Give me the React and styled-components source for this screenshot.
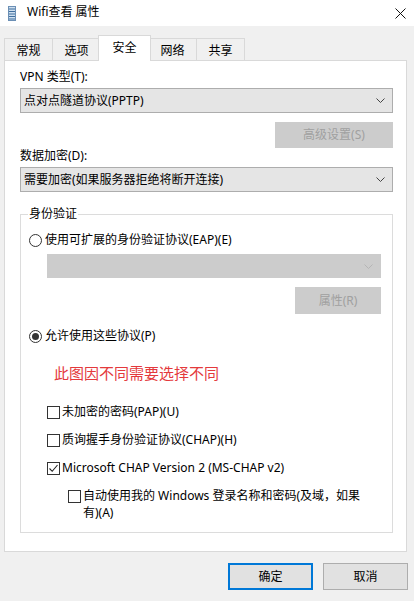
import React from "react";
import styled, { createGlobalStyle } from "styled-components";

const GlobalStyle = createGlobalStyle`
  html, body {
    margin: 0;
    padding: 0;
    background: #f0f0f0;
  }
  * {
    box-sizing: border-box;
  }
`;

const font = `"Noto Sans", "Noto Sans CJK SC", sans-serif`;

const Window = styled.div`
  width: 414px;
  height: 601px;
  background: #f0f0f0;
  display: flex;
  flex-direction: column;
  font-family: ${font};
  font-size: 12px;
  color: #000;
  overflow: hidden;
`;

const TitleBar = styled.div`
  height: 26px;
  background: #fff;
  display: flex;
  align-items: center;
  padding-left: 8px;
  padding-right: 8px;
  flex-shrink: 0;

  .title {
    margin-left: 11px;
    line-height: 16px;
    flex: 1;
    margin-top: -2px;
  }
`;

const TabRow = styled.div`
  display: flex;
  align-items: flex-end;
  margin-top: 9px;
  padding-left: 5px;
  position: relative;
  z-index: 1;
`;

const Tab = styled.div`
  height: ${(p) => (p.$active ? "26px" : "22px")};
  padding: 0 ${(p) => (p.$active ? "13.5px" : "11.5px")};
  margin: 0 ${(p) => (p.$active ? "-2px" : "0")} ${(p) => (p.$active ? "-1px" : "0")};
  margin-left: ${(p) => (p.$active ? "-3px" : "-1px")};
  background: ${(p) => (p.$active ? "#fff" : "#f0f0f0")};
  border: 1px solid #d9d9d9;
  border-bottom: none;
  display: flex;
  align-items: center;
  padding-bottom: ${(p) => (p.$active ? "3px" : "0")};
  position: relative;
  z-index: ${(p) => (p.$active ? 2 : 0)};
`;

const Panel = styled.div`
  margin-left: 4px;
  margin-right: 7px;
  height: 492px;
  background: #fff;
  border: 1px solid #d9d9d9;
  padding: 8px 13px 0 15px;
  display: flex;
  flex-direction: column;
`;

const Label = styled.div`
  line-height: 16px;
  margin-top: ${(p) => p.$mt || 0}px;
`;

const Select = styled.div`
  height: ${(p) => (p.$disabled ? "24px" : "25px")};
  margin-top: ${(p) => p.$mt || 0}px;
  margin-left: ${(p) => p.$ml || 0}px;
  background: ${(p) => (p.$disabled ? "#cccccc" : "#e5e5e5")};
  border: 1px solid ${(p) => (p.$disabled ? "#cccccc" : "#adadad")};
  display: flex;
  align-items: center;
  justify-content: space-between;
  padding: 0 7px 0 3px;
  line-height: 16px;

  svg {
    flex-shrink: 0;
  }
`;

const Button = styled.div`
  align-self: flex-end;
  width: ${(p) => p.$w}px;
  height: ${(p) => p.$h || 26}px;
  margin-top: ${(p) => p.$mt || 0}px;
  background: ${(p) => (p.$disabled ? "#cccccc" : "#e1e1e1")};
  color: ${(p) => (p.$disabled ? "#a0a0a0" : "#000")};
  border: ${(p) =>
    p.$focused
      ? "2px solid #0078d7"
      : p.$disabled
      ? "1px solid #cccccc"
      : "1px solid #adadad"};
  display: flex;
  align-items: center;
  justify-content: center;
  line-height: 16px;
`;

const Group = styled.fieldset`
  margin: 14px 0 0;
  padding: 0 11px 11px 7px;
  border: 1px solid #dcdcdc;
  min-width: 0;
  display: flex;
  flex-direction: column;

  legend {
    padding: 0 1px;
    line-height: 16px;
  }
`;

const OptionRow = styled.div`
  display: flex;
  align-items: ${(p) => (p.$top ? "flex-start" : "center")};
  gap: 2px;
  line-height: ${(p) => (p.$lh || 16)}px;
  margin-top: ${(p) => p.$mt || 0}px;
  margin-left: ${(p) => p.$ml || 0}px;
`;

const RadioCircle = styled.span`
  width: 13px;
  height: 13px;
  border-radius: 50%;
  border: 1px solid #333;
  background: #fff;
  display: flex;
  align-items: center;
  justify-content: center;
  flex-shrink: 0;
  margin-right: 1px;

  &::after {
    content: "";
    display: ${(p) => (p.$checked ? "block" : "none")};
    width: 7px;
    height: 7px;
    border-radius: 50%;
    background: #333;
  }
`;

const CheckBox = styled.span`
  width: 13px;
  height: 13px;
  border: 1px solid #333;
  background: #fff;
  display: flex;
  align-items: center;
  justify-content: center;
  flex-shrink: 0;
  margin-top: ${(p) => p.$mt || 0}px;
`;

const Note = styled.div`
  color: #e4393c;
  font-size: 15px;
  line-height: 20px;
  margin-top: 19px;
  margin-left: 26px;
`;

const Footer = styled.div`
  display: flex;
  justify-content: flex-end;
  gap: 10px;
  padding-right: 6px;
  margin-top: 11px;
`;

const Chevron = ({ color = "#444" }) => (
  <svg width="9" height="5" viewBox="0 0 9 5">
    <polyline points="0.5,0.5 4.5,4.5 8.5,0.5" fill="none" stroke={color} strokeWidth="1" />
  </svg>
);

const NetIcon = () => (
  <svg width="8" height="15" viewBox="0 0 8 15">
    <rect x="0.5" y="0.5" width="7" height="14" fill="#cfe0f0" stroke="#6b8fb5" />
    <line x1="1" y1="3" x2="7" y2="3" stroke="#3f6e9e" />
    <line x1="1" y1="5.5" x2="7" y2="5.5" stroke="#3f6e9e" />
    <line x1="1" y1="8" x2="7" y2="8" stroke="#3f6e9e" />
    <line x1="1" y1="10.5" x2="7" y2="10.5" stroke="#3f6e9e" />
    <line x1="1" y1="13" x2="7" y2="13" stroke="#3f6e9e" />
  </svg>
);

const CloseIcon = () => (
  <svg width="11" height="11" viewBox="0 0 11 11">
    <line x1="0.5" y1="0.5" x2="10.5" y2="10.5" stroke="#111" strokeWidth="1" />
    <line x1="10.5" y1="0.5" x2="0.5" y2="10.5" stroke="#111" strokeWidth="1" />
  </svg>
);

const Check = () => (
  <svg width="11" height="11" viewBox="0 0 11 11">
    <polyline points="1.5,5.5 4.2,8.3 9.5,2" fill="none" stroke="#222" strokeWidth="1.1" />
  </svg>
);

const tabs = ["常规", "选项", "安全", "网络", "共享"];

export default function App() {
  return (
    <>
      <GlobalStyle />
      <Window>
        <TitleBar>
          <NetIcon />
          <span className="title">Wifi查看 属性</span>
          <CloseIcon />
        </TitleBar>

        <TabRow>
          {tabs.map((t) => (
            <Tab key={t} $active={t === "安全"}>
              {t}
            </Tab>
          ))}
        </TabRow>

        <Panel>
          <Label>VPN 类型(T):</Label>
          <Select $mt={3}>
            <span>点对点隧道协议(PPTP)</span>
            <Chevron />
          </Select>
          <Button $w={118} $mt={9} $disabled>
            高级设置(S)
          </Button>
          <Label>数据加密(D):</Label>
          <Select $mt={3}>
            <span>需要加密(如果服务器拒绝将断开连接)</span>
            <Chevron />
          </Select>

          <Group>
            <legend>身份验证</legend>
            <OptionRow $mt={10} $ml={1}>
              <RadioCircle />
              <span>使用可扩展的身份验证协议(EAP)(E)</span>
            </OptionRow>
            <Select $mt={6} $ml={19} $disabled>
              <span />
              <Chevron color="#b5b5b5" />
            </Select>
            <Button $w={86} $h={27} $mt={9} $disabled>
              属性(R)
            </Button>
            <OptionRow $mt={14} $ml={1}>
              <RadioCircle $checked />
              <span>允许使用这些协议(P)</span>
            </OptionRow>
            <Note>此图因不同需要选择不同</Note>
            <OptionRow $mt={21} $ml={19}>
              <CheckBox />
              <span>未加密的密码(PAP)(U)</span>
            </OptionRow>
            <OptionRow $mt={12} $ml={19}>
              <CheckBox />
              <span>质询握手身份验证协议(CHAP)(H)</span>
            </OptionRow>
            <OptionRow $mt={12} $ml={19}>
              <CheckBox>
                <Check />
              </CheckBox>
              <span>Microsoft CHAP Version 2 (MS-CHAP v2)</span>
            </OptionRow>
            <OptionRow $mt={11} $ml={40} $lh={17} $top>
              <CheckBox $mt={3} />
              <span>
                自动使用我的 Windows 登录名称和密码(及域，如果
                <br />
                有)(A)
              </span>
            </OptionRow>
          </Group>
        </Panel>

        <Footer>
          <Button $w={85} $h={27} $focused>
            确定
          </Button>
          <Button $w={85} $h={27}>
            取消
          </Button>
        </Footer>
      </Window>
    </>
  );
}
